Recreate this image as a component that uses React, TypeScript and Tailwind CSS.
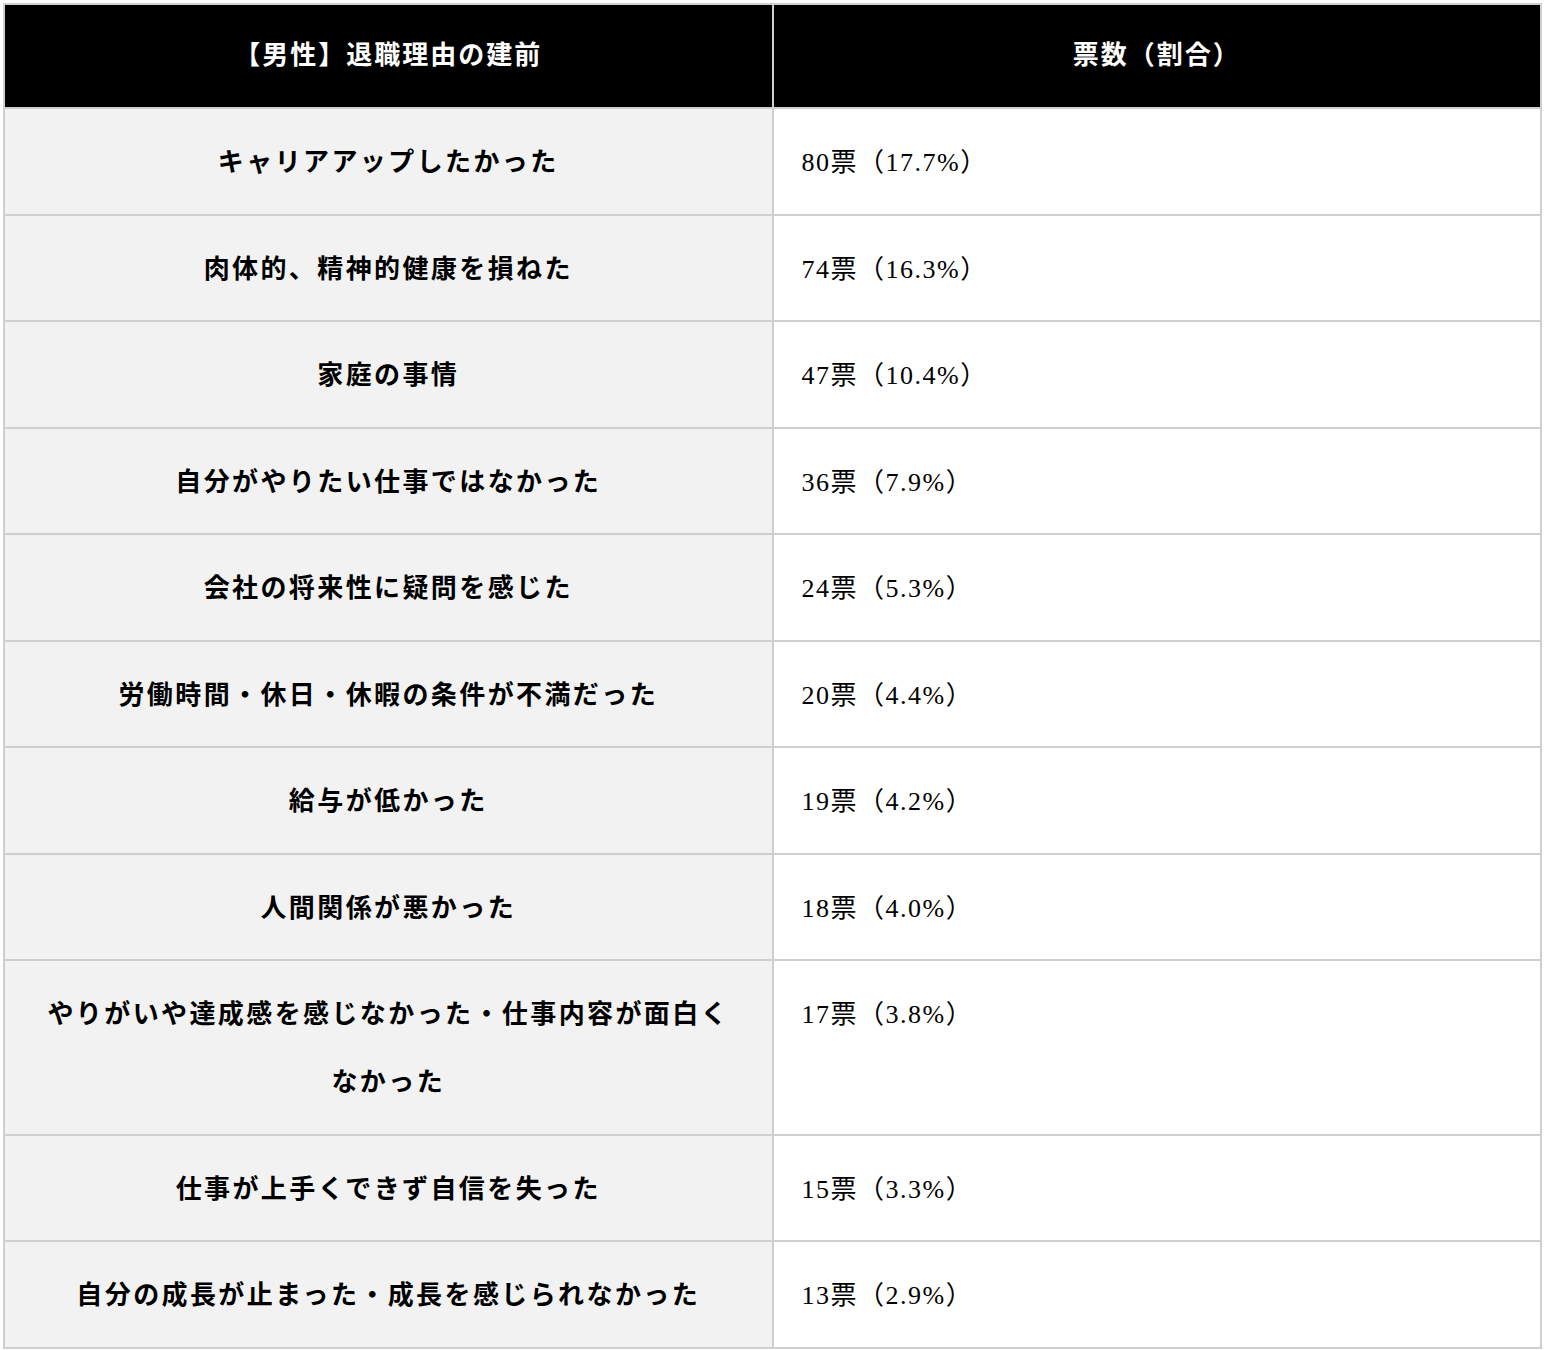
import React from "react";

const rows: [string, string][] = [
  ["キャリアアップしたかった", "80票（17.7%）"],
  ["肉体的、精神的健康を損ねた", "74票（16.3%）"],
  ["家庭の事情", "47票（10.4%）"],
  ["自分がやりたい仕事ではなかった", "36票（7.9%）"],
  ["会社の将来性に疑問を感じた", "24票（5.3%）"],
  ["労働時間・休日・休暇の条件が不満だった", "20票（4.4%）"],
  ["給与が低かった", "19票（4.2%）"],
  ["人間関係が悪かった", "18票（4.0%）"],
  ["やりがいや達成感を感じなかった・仕事内容が面白くなかった", "17票（3.8%）"],
  ["仕事が上手くできず自信を失った", "15票（3.3%）"],
  ["自分の成長が止まった・成長を感じられなかった", "13票（2.9%）"],
];

export default function App() {
  return (
    <div
      className="bg-white p-[3px] text-black"
      style={{ fontFamily: '"Liberation Serif", "Noto Sans CJK JP", serif' }}
    >
      <table className="w-full table-fixed border-collapse border-2 border-[#cfcfcf]">
        <thead>
          <tr className="bg-black text-white">
            <th className="w-1/2 border-2 border-[#cfcfcf] px-7 py-[17px] text-center text-[26px] font-bold leading-[68px] tracking-[2px]">
              【男性】退職理由の建前
            </th>
            <th className="w-1/2 border-2 border-[#cfcfcf] px-7 py-[17px] text-center text-[26px] font-bold leading-[68px] tracking-[2px]">
              票数（割合）
            </th>
          </tr>
        </thead>
        <tbody>
          {rows.map(([label, value]) => (
            <tr key={label}>
              <td className="border-2 border-[#cfcfcf] bg-[#f2f2f2] px-[36px] pt-[20px] pb-[16.5px] text-center align-top text-[26px] font-bold leading-[68px] tracking-[2.4px]">
                {label}
              </td>
              <td className="border-2 border-[#cfcfcf] bg-white px-7 pt-[20px] pb-[16.5px] text-left align-top text-[26px] leading-[68px] tracking-[1.5px]">
                {value}
              </td>
            </tr>
          ))}
        </tbody>
      </table>
    </div>
  );
}
